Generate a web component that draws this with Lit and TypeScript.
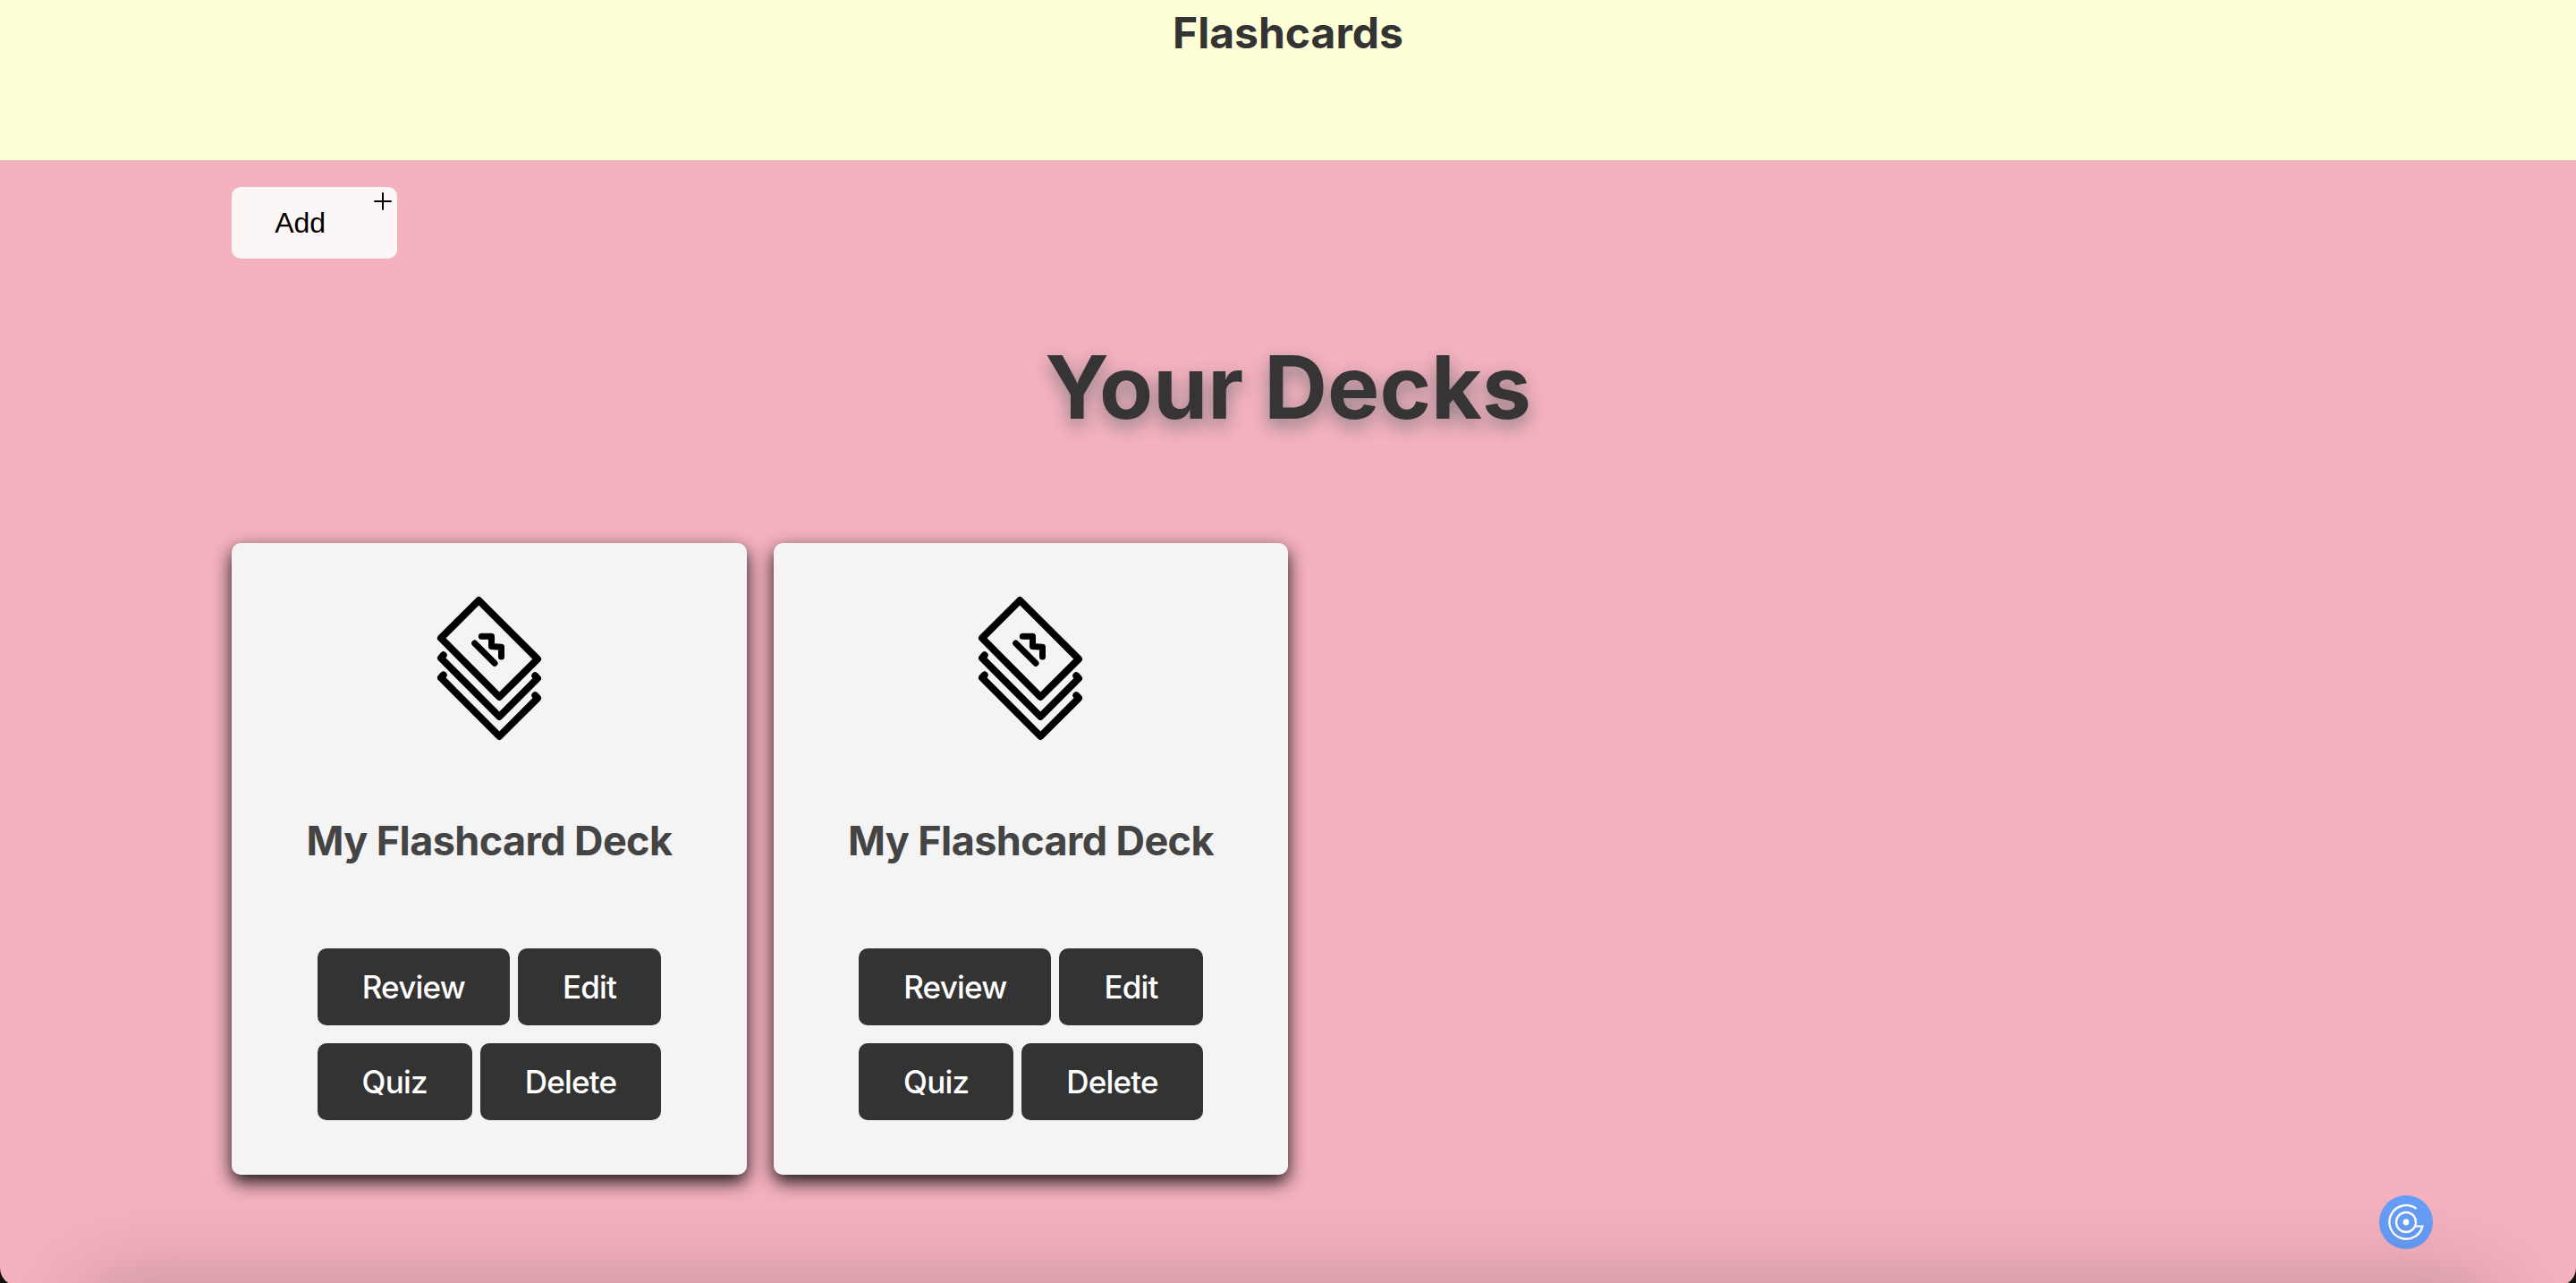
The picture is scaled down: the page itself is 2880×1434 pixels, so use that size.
import { LitElement, html, css } from 'lit';
import { customElement, property, state } from 'lit/decorators.js';

interface Deck {
  id: number;
  name: string;
}

@customElement('deck-card')
export class DeckCard extends LitElement {
  static styles = css`
    :host {
      display: block;
    }

    .card {
      display: flex;
      flex-direction: column;
      align-items: center;
      box-sizing: border-box;
      height: 706px;
      padding-top: 33px;
      border-radius: 10px;
      background-color: #f4f4f4;
      box-shadow: 0 8px 20px rgba(0, 0, 0, 0.9);
    }

    .icon {
      display: block;
      width: 200px;
      height: 210px;
      fill: none;
      stroke: #000;
      stroke-width: 8;
      stroke-linecap: round;
      stroke-linejoin: round;
    }

    .icon .mark {
      stroke-width: 7;
    }

    .name {
      margin: 61px 0 0;
      height: 58px;
      line-height: 58px;
      font-size: 45px;
      font-weight: 700;
      letter-spacing: -0.6px;
      color: #444;
      white-space: nowrap;
    }

    .actions {
      display: flex;
      flex-direction: column;
      align-items: center;
      gap: 20px;
      margin-top: 91px;
    }

    .row {
      display: flex;
      gap: 9px;
    }

    button {
      height: 86px;
      padding: 0 50px;
      border: none;
      border-radius: 10px;
      background-color: #333;
      color: #fff;
      font-family: Inter, sans-serif;
      font-size: 35px;
      font-weight: 500;
      letter-spacing: -0.8px;
      cursor: pointer;
    }

    button:hover {
      background-color: #555;
    }
  `;

  @property() name = '';

  render() {
    return html`
      <div class="card">
        <svg class="icon" viewBox="-3 0 200 210">
          <path d="M85.3 31L43 73.2L108.3 139L151 96.6Z" />
          <path d="M45.7 92.3L43 95.5L108.3 161L151 118.2L148.3 115.3" />
          <path d="M45.7 114.5L43 117.5L108.3 183L151 140.3L148.3 137.3" />
          <path class="mark" d="M80.7 79L103 101.3" />
          <path class="mark" d="M88.3 71.3H99.5V82.5L110.5 83.2V94" />
        </svg>
        <h2 class="name">${this.name}</h2>
        <div class="actions">
          <div class="row">
            <button>Review</button>
            <button>Edit</button>
          </div>
          <div class="row">
            <button>Quiz</button>
            <button>Delete</button>
          </div>
        </div>
      </div>
    `;
  }
}

@customElement('app-root')
export class AppRoot extends LitElement {
  static styles = css`
    :host {
      display: block;
      font-family: Inter, sans-serif;
    }

    .page {
      position: relative;
      box-sizing: border-box;
      height: 1434px;
      overflow: hidden;
      background-color: #f4b1be;
    }

    .header {
      height: 179px;
      background-color: #feffd6;
      text-align: center;
    }

    .logo {
      margin: 0;
      padding-top: 8px;
      line-height: 58px;
      font-size: 48px;
      font-weight: 700;
      color: #333;
    }

    .content {
      padding: 30px 9% 0;
    }

    .add {
      display: flex;
      justify-content: space-between;
      box-sizing: border-box;
      width: 185px;
      height: 80px;
      padding: 0 5px 0 48px;
      border: none;
      border-radius: 10px;
      background-color: #fdf6f6;
      color: #000;
      font-family: 'Liberation Sans', sans-serif;
      font-size: 32px;
      line-height: 80px;
      cursor: pointer;
    }

    .plus {
      width: 22px;
      height: 22px;
      margin-top: 5px;
      stroke: #000;
      stroke-width: 2;
    }

    .title {
      margin: 84px 0 0;
      line-height: 119px;
      font-size: 98px;
      font-weight: 700;
      color: #373435;
      text-align: center;
      text-shadow: 0 8px 20px rgba(85, 100, 100, 0.65);
    }

    .decks {
      display: grid;
      grid-template-columns: 575.5px 575.5px;
      gap: 30px;
      margin-top: 115px;
    }

    /* Soft shade rising from the bottom edge of the window */
    .shade {
      position: absolute;
      left: 90px;
      right: 90px;
      bottom: -200px;
      height: 200px;
      box-shadow: 0 0 100px rgba(0, 0, 0, 0.2);
      pointer-events: none;
    }

    .corners {
      position: absolute;
      left: 0;
      right: 0;
      top: 0;
      bottom: -3px;
      border-radius: 0 0 20px 20px;
      box-shadow: 0 0 0 20px #120f0c;
      pointer-events: none;
    }

    .widget {
      position: absolute;
      right: 160px;
      bottom: 38px;
      width: 60px;
      height: 60px;
    }
  `;

  @state() private decks: Deck[] = [
    { id: 1, name: 'My Flashcard Deck' },
    { id: 2, name: 'My Flashcard Deck' },
  ];

  render() {
    return html`
      <div class="page">
        <header class="header">
          <h1 class="logo">Flashcards</h1>
        </header>
        <main class="content">
          <button class="add">
            Add
            <svg class="plus" viewBox="0 0 22 22">
              <path d="M1.3 11H20.7M11 1.3V20.7" />
            </svg>
          </button>
          <h1 class="title">Your Decks</h1>
          <section class="decks">
            ${this.decks.map(deck => html`<deck-card .name=${deck.name}></deck-card>`)}
          </section>
        </main>
        <svg class="widget" viewBox="-30 -30 60 60">
          <circle r="30" fill="#669df6" />
          <circle r="3.4" fill="#fff" />
          <g fill="none" stroke="#fff" stroke-width="2.4">
            <circle r="11" />
            <path d="M11.6 -15A18.8 18.8 0 1 0 18.4 4.6H10.5" />
          </g>
        </svg>
        <div class="shade"></div>
        <div class="corners"></div>
      </div>
    `;
  }
}
